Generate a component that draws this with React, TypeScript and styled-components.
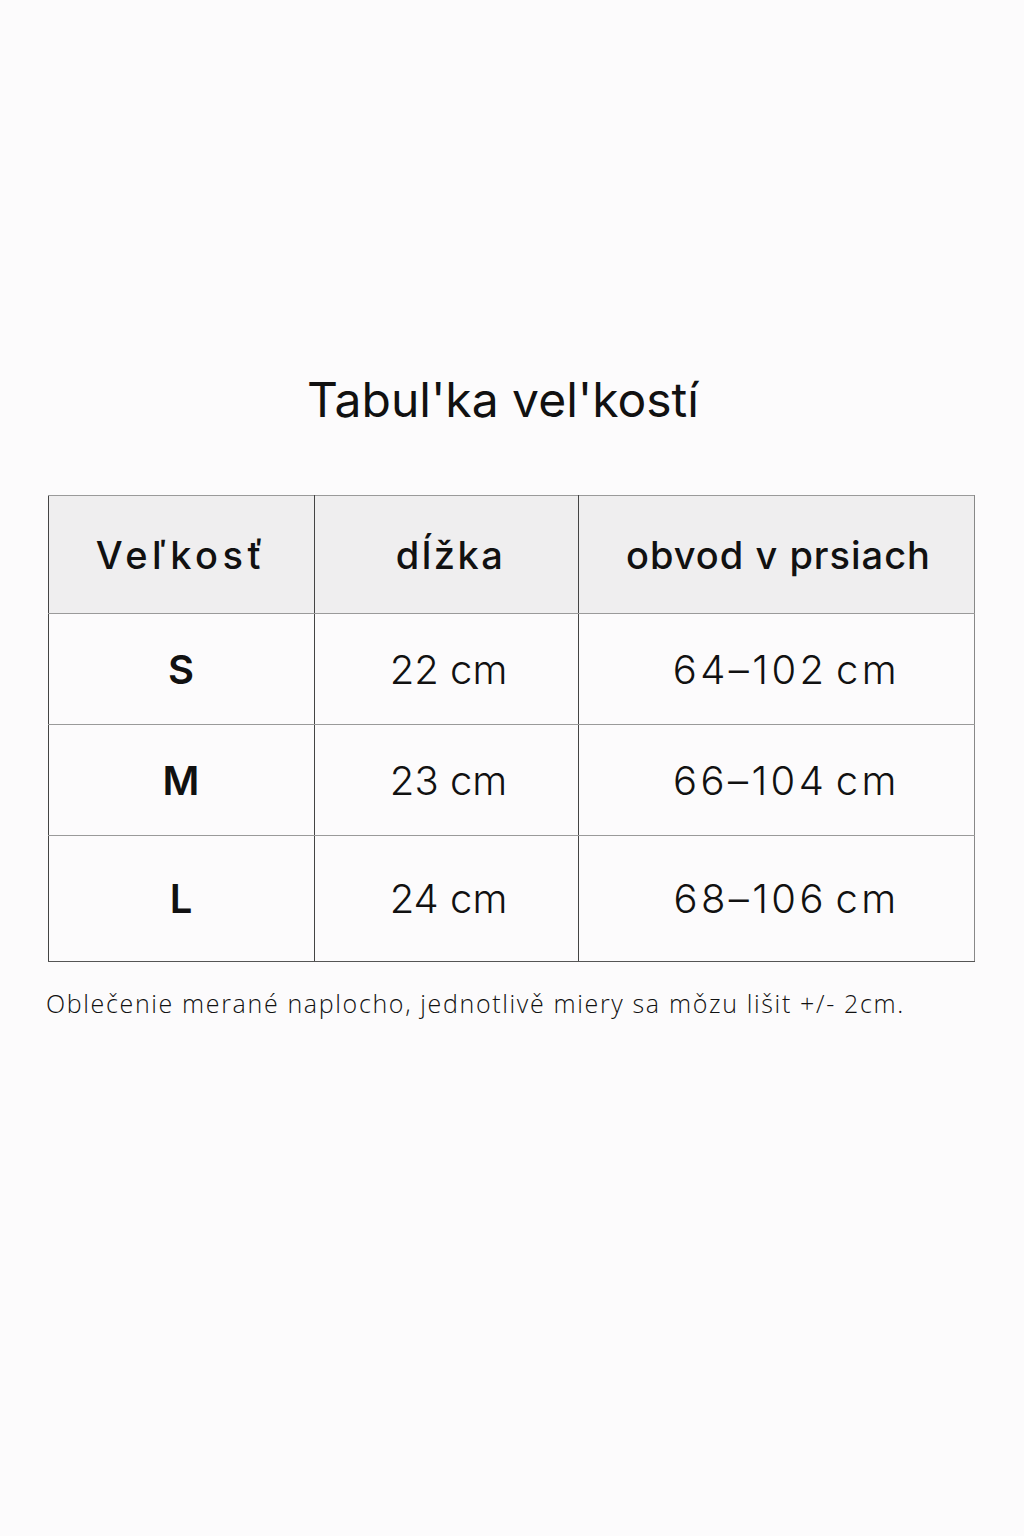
import React from "react";
import styled, { createGlobalStyle } from "styled-components";

const Global = createGlobalStyle`
  html, body { margin: 0; padding: 0; background: #fcfbfc; }
  body { font-family: Inter, "Noto Sans", sans-serif; color: #111; }
`;

const Page = styled.div`
  width: 1024px;
  min-height: 1536px;
  box-sizing: border-box;
  padding: 372px 50px 0 48px;
  display: flex;
  flex-direction: column;
`;

const Title = styled.h1`
  margin: 0;
  height: 123px;
  font-size: 48px;
  line-height: 56px;
  font-weight: 400;
  text-align: center;
  padding-right: 16px;
  color: #111;
`;

const Table = styled.table`
  width: 926px;
  border-collapse: collapse;
  table-layout: fixed;
`;

const Col = styled.col<{ $w: number }>`
  width: ${(p) => p.$w}px;
`;

const HeadCell = styled.th<{ $ls?: number; $shift?: number }>`
  height: 117px;
  background: #efeeef;
  font-size: 38px;
  font-weight: 500;
  letter-spacing: ${(p) => p.$ls ?? 1}px;
  text-align: center;
  vertical-align: middle;
  padding: 0 0 0 ${(p) => p.$shift ?? 0}px;
  border-top: 1px solid #9a9a9a;
  border-bottom: 1px solid #9a9a9a;
  border-left: 1px solid #444;
  border-right: 1px solid #444;
  &:last-child { border-right-color: #888; }
`;

const Cell = styled.td<{ $h: number; $bold?: boolean; $shift?: number; $ls?: number; $ws?: number }>`
  height: ${(p) => p.$h}px;
  font-size: 40px;
  font-weight: ${(p) => (p.$bold ? 600 : 300)};
  letter-spacing: ${(p) => p.$ls ?? 0}px;
  word-spacing: ${(p) => p.$ws ?? 0}px;
  text-align: center;
  vertical-align: middle;
  padding: 0 0 0 ${(p) => p.$shift ?? 0}px;
  border-bottom: 1px solid #9a9a9a;
  border-left: 1px solid #444;
  border-right: 1px solid #444;
  &:last-child { border-right-color: #888; }
`;

const LastRow = styled.tr`
  td { border-bottom: 1px solid #555; }
`;

const Note = styled.p`
  margin: 24px 0 0 -2px;
  font-family: "Open Sans", sans-serif;
  font-weight: 300;
  font-size: 25px;
  letter-spacing: 1.65px;
  white-space: nowrap;
  color: #111;
`;

const rows = [
  { size: "S", len: "22 cm", chest: "64–102 cm", h: 110 },
  { size: "M", len: "23 cm", chest: "66–104 cm", h: 110 },
  { size: "L", len: "24 cm", chest: "68–106 cm", h: 125 },
];

export default function App() {
  return (
    <>
      <Global />
      <Page>
        <Title>Tabul'ka vel'kostí</Title>
        <Table>
          <colgroup>
            <Col $w={266} />
            <Col $w={264} />
            <Col $w={396} />
          </colgroup>
          <thead>
            <tr>
              <HeadCell $ls={4.5}>Veľkosť</HeadCell>
              <HeadCell $ls={2.5} $shift={8}>dĺžka</HeadCell>
              <HeadCell $ls={1} $shift={4}>obvod v prsiach</HeadCell>
            </tr>
          </thead>
          <tbody>
            {rows.map((r, i) => {
              const cells = (
                <>
                  <Cell $h={r.h} $bold $ls={1}>{r.size}</Cell>
                  <Cell $h={r.h} $shift={4}>{r.len}</Cell>
                  <Cell $h={r.h} $shift={20} $ls={3.4} $ws={-6}>{r.chest}</Cell>
                </>
              );
              return i === rows.length - 1 ? (
                <LastRow key={r.size}>{cells}</LastRow>
              ) : (
                <tr key={r.size}>{cells}</tr>
              );
            })}
          </tbody>
        </Table>
        <Note>Oblečenie merané naplocho, jednotlivě miery sa mǒzu lišit +/- 2cm.</Note>
      </Page>
    </>
  );
}
